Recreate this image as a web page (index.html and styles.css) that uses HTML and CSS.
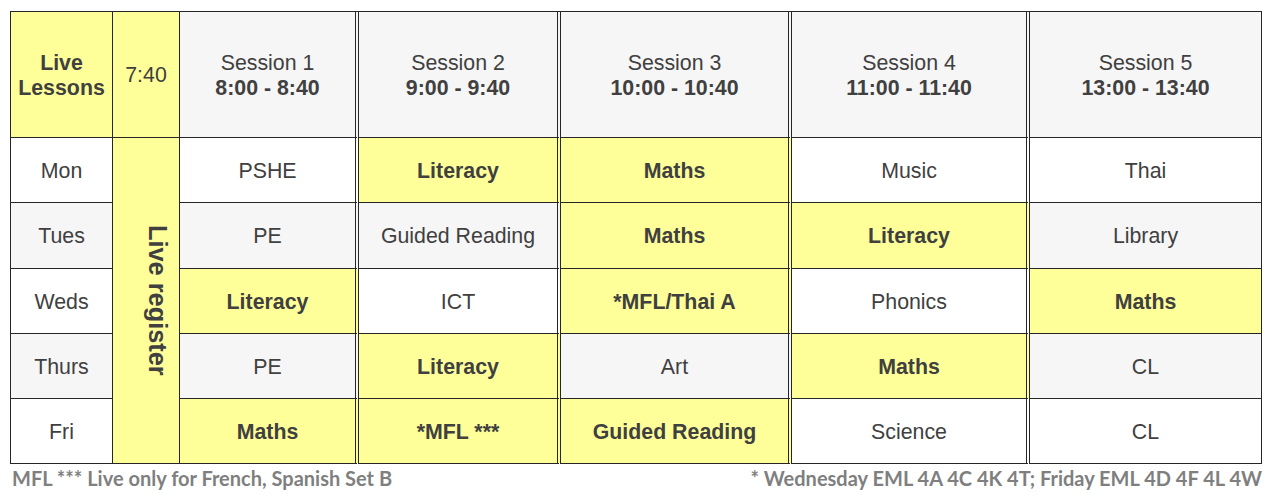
FILE: index.html
```html
<!DOCTYPE html>
<html lang="en">
<head>
<meta charset="utf-8">
<title>Live Lessons Timetable</title>
<link rel="stylesheet" href="styles.css">
</head>
<body>
<div class="page">
  <div class="timetable">
    <div class="cell yellow bold"><span>Live<br>Lessons</span></div>
    <div class="cell yellow"><span>7:40</span></div>
    <div class="cell gray dbl"><span>Session 1<br><b>8:00 - 8:40</b></span></div>
    <div class="cell gray dbl"><span>Session 2<br><b>9:00 - 9:40</b></span></div>
    <div class="cell gray dbl"><span>Session 3<br><b>10:00 - 10:40</b></span></div>
    <div class="cell gray dbl"><span>Session 4<br><b>11:00 - 11:40</b></span></div>
    <div class="cell gray"><span>Session 5<br><b>13:00 - 13:40</b></span></div>

    <div class="cell white"><span>Mon</span></div>
    <div class="cell yellow register"><span class="vertical">Live register</span></div>
    <div class="cell white dbl"><span>PSHE</span></div>
    <div class="cell yellow bold dbl"><span>Literacy</span></div>
    <div class="cell yellow bold dbl"><span>Maths</span></div>
    <div class="cell white dbl"><span>Music</span></div>
    <div class="cell white"><span>Thai</span></div>

    <div class="cell gray"><span>Tues</span></div>
    <div class="cell gray dbl"><span>PE</span></div>
    <div class="cell gray dbl"><span>Guided Reading</span></div>
    <div class="cell yellow bold dbl"><span>Maths</span></div>
    <div class="cell yellow bold dbl"><span>Literacy</span></div>
    <div class="cell gray"><span>Library</span></div>

    <div class="cell white"><span>Weds</span></div>
    <div class="cell yellow bold dbl"><span>Literacy</span></div>
    <div class="cell white dbl"><span>ICT</span></div>
    <div class="cell yellow bold dbl"><span>*MFL/Thai A</span></div>
    <div class="cell white dbl"><span>Phonics</span></div>
    <div class="cell yellow bold"><span>Maths</span></div>

    <div class="cell gray"><span>Thurs</span></div>
    <div class="cell gray dbl"><span>PE</span></div>
    <div class="cell yellow bold dbl"><span>Literacy</span></div>
    <div class="cell gray dbl"><span>Art</span></div>
    <div class="cell yellow bold dbl"><span>Maths</span></div>
    <div class="cell gray"><span>CL</span></div>

    <div class="cell white"><span>Fri</span></div>
    <div class="cell yellow bold dbl"><span>Maths</span></div>
    <div class="cell yellow bold dbl"><span>*MFL ***</span></div>
    <div class="cell yellow bold dbl"><span>Guided Reading</span></div>
    <div class="cell white dbl"><span>Science</span></div>
    <div class="cell white"><span>CL</span></div>
  </div>
  <div class="notes">
    <span>MFL *** Live only for French, Spanish Set B</span>
    <span>* Wednesday EML 4A 4C 4K 4T; Friday EML 4D 4F 4L 4W</span>
  </div>
</div>
</body>
</html>
```
FILE: styles.css
```css
html, body {
  margin: 0;
  padding: 0;
  background: #ffffff;
}

.page {
  width: 1252px;
  padding: 11px 0 0 10px;
}

.timetable {
  display: grid;
  grid-template-columns: 102px 67px 179px 202px 231px 238px 232px;
  grid-template-rows: 126px 65px 66px 65px 65px 65px;
  border-top: 1px solid #262626;
  border-left: 1px solid #262626;
  font-family: "Liberation Sans", Arial, sans-serif;
  font-size: 21.33px;
  color: #404040;
}

.cell {
  box-sizing: border-box;
  border-right: 1px solid #262626;
  border-bottom: 1px solid #262626;
  display: flex;
  align-items: center;
  justify-content: center;
  text-align: center;
  line-height: 25px;
  padding-top: 2px;
}

.cell.dbl {
  border-right: 4px double #262626;
}

.yellow { background: #ffff99; }
.gray { background: #f6f6f6; }
.white { background: #ffffff; }

.bold, .cell b {
  font-weight: bold;
}

.register {
  grid-column: 2;
  grid-row: 2 / span 5;
  padding: 0 0 0 22px;
}

.vertical {
  writing-mode: vertical-rl;
  font-weight: bold;
  font-size: 25.33px;
  line-height: 1;
}

.notes {
  display: flex;
  justify-content: space-between;
  padding: 1px 0 0 2px;
  font-family: Lato, "Open Sans", sans-serif;
  font-weight: bold;
  font-size: 20px;
  line-height: 26px;
  color: #7f7f7f;
}
```
